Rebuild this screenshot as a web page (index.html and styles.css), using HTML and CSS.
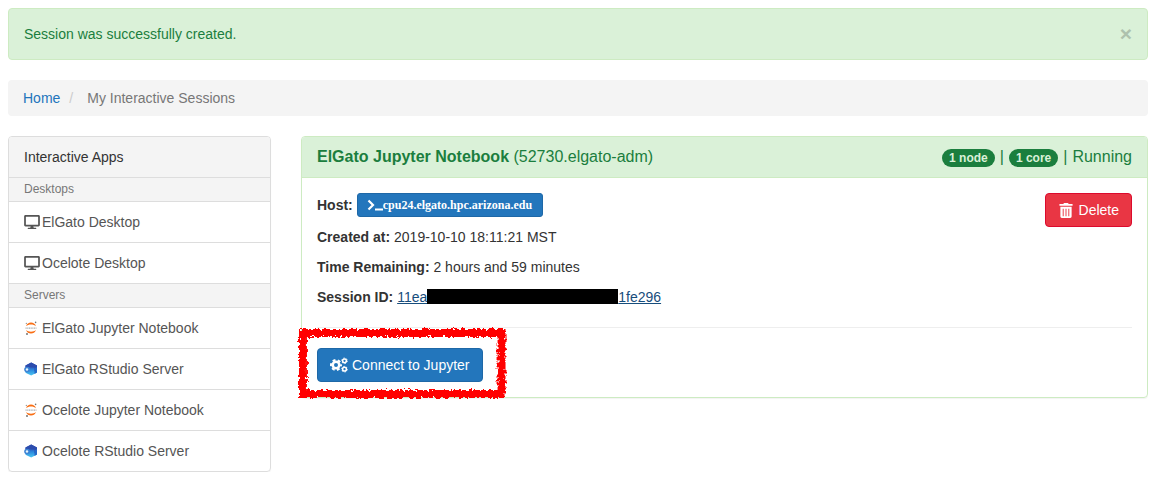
FILE: index.html
```html
<!DOCTYPE html>
<html lang="en">
<head>
<meta charset="utf-8">
<title>My Interactive Sessions</title>
<link rel="stylesheet" href="styles.css">
</head>
<body>
<svg class="defs" aria-hidden="true">
  <defs>
    <linearGradient id="cube" x1="0" y1="0" x2="0" y2="1"><stop offset="0.3" stop-color="#2e50b4"/><stop offset="0.55" stop-color="#2a86dc"/><stop offset="1" stop-color="#4cc8f2"/></linearGradient>
    <symbol id="desktop" viewBox="0 0 576 512"><path fill="currentColor" d="M528 0H48C21.500 0 0 21.500 0 48v320c0 26.500 21.500 48 48 48h192l-16 48h-72c-13.300 0-24 10.700-24 24s10.700 24 24 24h272c13.300 0 24-10.700 24-24s-10.700-24-24-24h-72l-16-48h192c26.500 0 48-21.500 48-48V48c0-26.500-21.500-48-48-48zm-16 352H64V64h448v288z"/></symbol>
    <symbol id="jupyter" viewBox="0 0 14 14"><path fill="#f96e14" d="M2 5.200C3.500 .3 10.500 .3 12 5.200 9.500 3 4.500 3 2 5.200zM2 9c1.500 4.700 8.500 4.700 10 0-2.500 2.200-7.500 2.200-10 0z"/><path fill="none" stroke="#999" stroke-width="1" stroke-dasharray="1.200 .5" d="M1.500 7.100h11"/><circle cx="11.600" cy="1.400" r=".8" fill="#777"/><circle cx="2.300" cy="2.300" r=".6" fill="#777"/><circle cx="3" cy="13" r=".9" fill="#666"/></symbol>
    <symbol id="rstudio" viewBox="0 0 14 14"><path fill="url(#cube)" d="M7.200 .6L13 3.400v7.200L7.200 13.600 1.500 10.800V3.400z"/><path fill="#2c4cae" d="M7.200 .6L13 3.400v6L10.500 9V5.500L1.500 5V3.400z"/><path fill="#2467c8" d="M10.500 6.500L13 5v5.600l-2.500 1.300z"/><circle cx="3" cy="7.500" r="2.800" fill="#3d83d4"/><circle cx="3" cy="7.500" r="1.200" fill="#e5f4ff"/></symbol>
  </defs>
</svg>

<div class="alert" role="alert">
  <span>Session was successfully created.</span>
  <button class="close" type="button" aria-label="Close">×</button>
</div>

<nav class="breadcrumb" aria-label="Breadcrumb">
  <a href="#">Home</a><span class="divider">/</span><span>My Interactive Sessions</span>
</nav>

<main class="layout">
  <aside class="apps">
    <div class="apps-title">Interactive Apps</div>
    <div class="apps-group">Desktops</div>
    <a class="app" href="#"><svg class="icon-desktop"><use href="#desktop"/></svg>ElGato Desktop</a>
    <a class="app" href="#"><svg class="icon-desktop"><use href="#desktop"/></svg>Ocelote Desktop</a>
    <div class="apps-group">Servers</div>
    <a class="app" href="#"><svg class="icon-app"><use href="#jupyter"/></svg>ElGato Jupyter Notebook</a>
    <a class="app" href="#"><svg class="icon-app"><use href="#rstudio"/></svg>ElGato RStudio Server</a>
    <a class="app" href="#"><svg class="icon-app"><use href="#jupyter"/></svg>Ocelote Jupyter Notebook</a>
    <a class="app" href="#"><svg class="icon-app"><use href="#rstudio"/></svg>Ocelote RStudio Server</a>
  </aside>

  <section class="session">
    <header class="session-head">
      <h1><b>ElGato Jupyter Notebook</b> <span>(52730.elgato-adm)</span></h1>
      <div class="status"><span class="badge">1 node</span><span>|</span><span class="badge">1 core</span><span>|</span><span>Running</span></div>
    </header>
    <div class="session-body">
      <div class="details-row">
        <div class="details">
          <div class="host"><b>Host:</b>
            <a class="btn btn-host" href="#"><svg class="icon-prompt" viewBox="0 0 16 12"><path d="M1.500 1.500L6 6l-4.500 4.500M8 10.500h8" fill="none" stroke="currentColor" stroke-width="2.200"/></svg>cpu24.elgato.hpc.arizona.edu</a>
          </div>
          <div><b>Created at:</b> 2019-10-10 18:11:21 MST</div>
          <div><b>Time Remaining:</b> 2 hours and 59 minutes</div>
          <div><b>Session ID:</b> <a class="session-id" href="#">11ea<span class="redacted"></span>1fe296</a></div>
        </div>
        <button class="btn btn-danger" type="button"><svg class="icon-trash" viewBox="0 0 14 16"><path fill="currentColor" fill-rule="evenodd" d="M5 0h4l1 1h4v2H0V1h4zM1 4h12v10.500Q13 16 11.500 16h-9Q1 16 1 14.500zM3.500 6v8h1V6zM6.500 6v8h1V6zM9.500 6v8h1V6z"/></svg>Delete</button>
      </div>
      <hr>
      <div class="launch">
        <button class="btn btn-primary" type="button"><svg class="icon-cogs" viewBox="0 0 18 16"><g fill="none" stroke="currentColor"><circle cx="6" cy="8" r="3.300" stroke-width="2.600"/><circle cx="6" cy="8" r="5" stroke-width="2" stroke-dasharray="2.800 2.436" stroke-dashoffset="1.400"/><circle cx="14.500" cy="3.800" r="1.900" stroke-width="1.500"/><circle cx="14.500" cy="3.800" r="2.800" stroke-width="1" stroke-dasharray="1.300 1.632"/><circle cx="14.500" cy="12.200" r="1.900" stroke-width="1.500"/><circle cx="14.500" cy="12.200" r="2.800" stroke-width="1" stroke-dasharray="1.300 1.632"/></g></svg>Connect to Jupyter</button>
        <svg class="marker" aria-hidden="true" viewBox="0 0 211 72" preserveAspectRatio="none">
          <defs><filter id="chalk" x="-5%" y="-10%" width="110%" height="120%"><feTurbulence type="fractalNoise" baseFrequency="0.3" numOctaves="3" seed="8" result="noise"/><feDisplacementMap in="SourceGraphic" in2="noise" scale="7" xChannelSelector="R" yChannelSelector="G"/></filter></defs>
          <path fill="none" stroke="#f00" stroke-width="8" filter="url(#chalk)" d="M5 6H206V67H6V2"/>
        </svg>
      </div>
    </div>
  </section>
</main>
</body>
</html>
```
FILE: styles.css
```css
* { box-sizing: border-box; }
body {
  margin: 8px 7px 8px 8px;
  font: 14px/20px "Liberation Sans", Arial, sans-serif;
  color: #333;
  background: #fff;
}
.defs { position: absolute; width: 0; height: 0; }
a { color: #2275bc; text-decoration: none; }
button { font: inherit; cursor: pointer; }

.alert {
  display: flex;
  justify-content: space-between;
  padding: 15px;
  margin-bottom: 20px;
  border: 1px solid #cdebc2;
  border-radius: 4px;
  background: #daf1d8;
  color: #1b7e3e;
}
.close {
  padding: 0;
  height: 20px;
  border: 0;
  background: none;
  color: #aec1ad;
  font-size: 21px;
  font-weight: bold;
  line-height: 20px;
}
.breadcrumb {
  display: flex;
  padding: 8px 15px;
  margin-bottom: 20px;
  border-radius: 4px;
  background: #f4f4f4;
  color: #777;
}
.divider { padding: 0 14px 0 9px; color: #ccc; }

.layout {
  display: grid;
  grid-template-columns: calc(25% - 22px) 1fr;
  gap: 30px;
  align-items: start;
}
.apps {
  border: 1px solid #ddd;
  border-radius: 4px;
  box-shadow: 0 1px 1px rgba(0, 0, 0, 0.05);
  overflow: hidden;
}
.apps-title { padding: 10px 15px; background: #f4f4f4; }
.apps-group {
  padding: 1px 15px 2px;
  border-top: 1px solid #ddd;
  background: #f4f4f4;
  color: #777;
  font-size: 12px;
}
.app {
  display: flex;
  align-items: center;
  padding: 10px 15px;
  border-top: 1px solid #ddd;
  color: #555;
}
.icon-desktop { width: 16px; height: 14px; margin-right: 2px; }
.icon-app { width: 14px; height: 14px; margin-right: 4px; }

.session {
  border: 1px solid #cdebc2;
  border-radius: 4px;
  box-shadow: 0 1px 1px rgba(0, 0, 0, 0.05);
}
.session-head {
  display: flex;
  justify-content: space-between;
  padding: 10px 15px;
  border-bottom: 1px solid #cdebc2;
  border-radius: 3px 3px 0 0;
  background: #daf1d8;
  color: #1b7e3e;
  font-size: 16px;
}
h1 { margin: 0; font-size: 16px; font-weight: normal; line-height: 20px; }
.status { display: flex; align-items: center; gap: 5px; }
.badge {
  padding: 3px 7px;
  margin-top: 2px;
  border-radius: 10px;
  background: #1b7e3e;
  color: #daf1d8;
  font-size: 12px;
  font-weight: bold;
  line-height: 12px;
}
.session-body { padding: 15px; }
.details-row { display: flex; justify-content: space-between; align-items: flex-start; }
.details { display: grid; gap: 10px; }
.host { display: flex; align-items: center; gap: 4px; }
.btn {
  display: inline-flex;
  align-items: center;
  padding: 6px 12px;
  border: 1px solid #1e68a7;
  border-radius: 4px;
  background: #2376bc;
  color: #fff;
  white-space: nowrap;
}
.btn-host {
  height: 24px;
  padding: 0 10px 0 9px;
  border-radius: 3px;
  font: bold 12px/22px "Liberation Serif", "Times New Roman", serif;
}
.icon-prompt { width: 16px; height: 12px; }
.btn-danger { border-color: #dc0a2d; background: #e93644; }
.icon-trash { width: 14px; height: 15px; margin: 0 6px 0 1px; }
.session-id { color: #174d7c; text-decoration: underline; }
.redacted {
  display: inline-block;
  width: 191px;
  height: 15px;
  background: #000;
  vertical-align: -2px;
}
hr { height: 1px; margin: 20px 0; border: 0; background: #eee; }
.launch { position: relative; display: flex; width: fit-content; }
.icon-cogs { width: 18px; height: 16px; margin-right: 4px; }
.marker {
  position: absolute;
  top: -21px;
  left: -20px;
  width: calc(100% + 44px);
  height: 72px;
  pointer-events: none;
}
```
